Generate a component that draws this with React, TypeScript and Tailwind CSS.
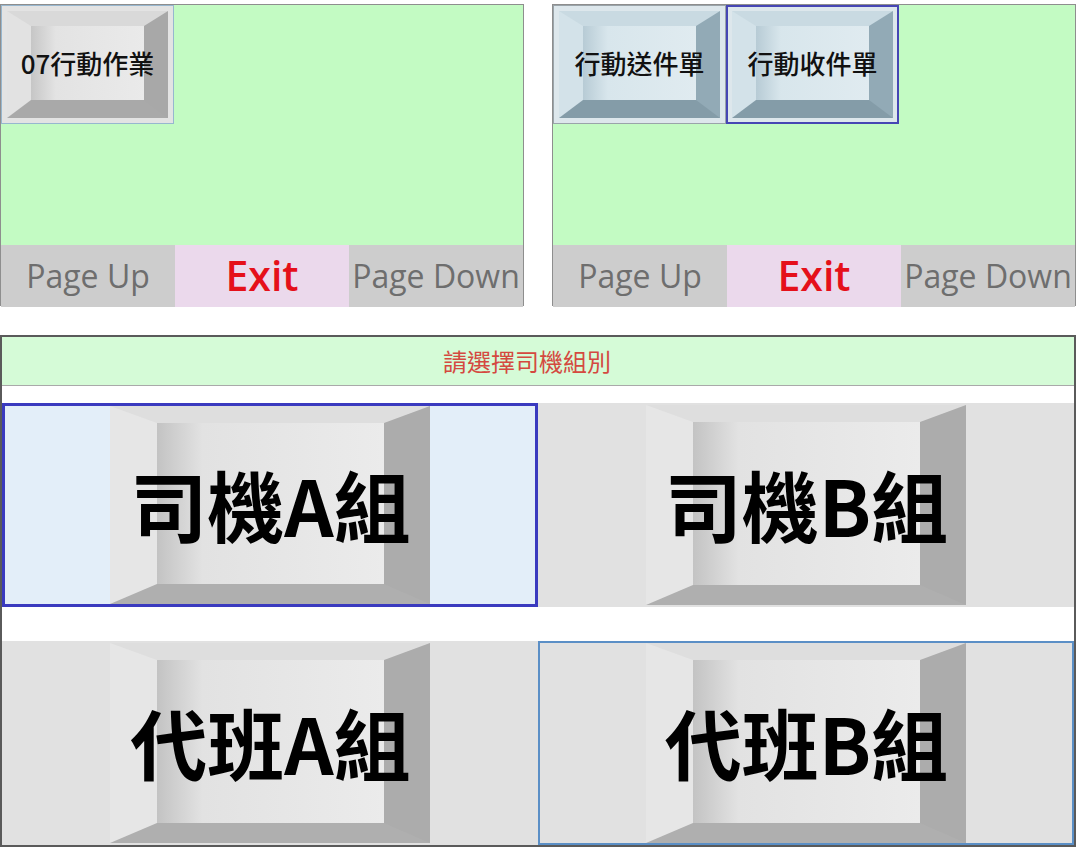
import React from 'react';

const cjk = "font-['Noto_Sans_CJK_TC','Noto_Sans_CJK_SC',sans-serif]";
const latin = "font-['Open_Sans','Noto_Sans',sans-serif]";

type SmallProps = { label: string; tone: 'grey' | 'blue'; selected?: boolean };

// small bevelled key used on the top panels
const SmallKey = ({ label, tone, selected }: SmallProps) => {
   const frame = selected
      ? 'border-2 border-[#4646b4] p-[4px]'
      : tone === 'grey'
      ? 'border border-[#97b7cf] p-[5px]'
      : 'border border-[#9aa4aa] p-[5px]';
   const bevel =
      tone === 'grey'
         ? 'border-t-[#d9d9d9] border-l-[#e2e2e2] border-r-[#a8a8a8] border-b-[#a9a9a9] bg-[linear-gradient(90deg,#c6c6c6_0%,#e3e3e3_22%,#eaeaea_100%)]'
         : 'border-t-[#c9dae2] border-l-[#d3e2e9] border-r-[#92aab6] border-b-[#849ca8] bg-[linear-gradient(90deg,#b7cbd5_0%,#d8e6ec_22%,#e0ebf0_100%)]';
   return (
      <div
         className={`w-[173px] h-[119px] ${frame} ${
            tone === 'grey' ? 'bg-[#e3e3e3]' : 'bg-[#dde7ec]'
         }`}
      >
         <div
            className={`h-full border-solid border-t-[15px] border-l-[24px] border-r-[24px] border-b-[18px] ${bevel} flex items-center justify-center`}
         >
            <span className={`${cjk} whitespace-nowrap text-[26px] font-medium text-[#111] leading-none`}>
               {label}
            </span>
         </div>
      </div>
   );
};

type PanelProps = { keys: SmallProps[] };

const Panel = ({ keys }: PanelProps) => (
   <div className="w-[524px] h-[302px] border border-[#8e8e8e] flex flex-col">
      <div className="flex-1 bg-[#c3fbc3] flex items-start">
         {keys.map((k) => (
            <SmallKey key={k.label} {...k} />
         ))}
      </div>
      <div className="h-[60px] grid grid-cols-3">
         <div className={`bg-[#cdcdcd] flex items-center justify-center ${latin} text-[32px] text-[#6e6e6e]`}>
            Page Up
         </div>
         <div className={`bg-[#ebd9ec] flex items-center justify-center ${latin} text-[41px] font-semibold text-[#e5101a]`}>
            Exit
         </div>
         <div className={`bg-[#cdcdcd] flex items-center justify-center ${latin} text-[32px] text-[#6e6e6e] whitespace-nowrap`}>
            Page Down
         </div>
      </div>
   </div>
);

type BigProps = { label: string; variant: 'active' | 'outlined' | 'plain' };

// large group key in the driver selection panel
const BigKey = ({ label, variant }: BigProps) => {
   const cell =
      variant === 'active'
         ? 'border-[3px] border-[#3a3abf] bg-[#e3eef9]'
         : variant === 'outlined'
         ? 'border-2 border-[#5b8fc6] bg-[#e1e1e1]'
         : 'border-2 border-[#e1e1e1] bg-[#e1e1e1]';
   return (
      <div className={`h-full flex justify-center ${cell}`}>
         <div className="w-[320px] h-full border-solid border-t-[17px] border-l-[47px] border-r-[46px] border-b-[20px] border-t-[#dedede] border-l-[#e6e6e6] border-r-[#acacac] border-b-[#afafaf] bg-[linear-gradient(90deg,#c3c3c3_0%,#e2e2e2_20%,#ebebeb_100%)] flex items-center justify-center">
            <span className={`${cjk} whitespace-nowrap text-[77px] font-bold text-black leading-none`}>
               {label}
            </span>
         </div>
      </div>
   );
};

export default function App() {
   return (
      <div className="w-[1080px] h-[851px] bg-white pt-[4px]">
         <div className="flex gap-[28px]">
            <Panel keys={[{ label: '07行動作業', tone: 'grey' }]} />
            <Panel
               keys={[
                  { label: '行動送件單', tone: 'blue' },
                  { label: '行動收件單', tone: 'blue', selected: true },
               ]}
            />
         </div>
         <div className="mt-[29px] w-[1076px] h-[512px] border-2 border-[#5a5a5a] flex flex-col">
            <div className="h-[49px] bg-[#d5fbd7] border-b border-[#a9a9a9] flex items-center justify-center">
               <span className={`${cjk} text-[24px] text-[#d4493f] pr-[22px]`}>請選擇司機組別</span>
            </div>
            <div className="h-[17px]" />
            <div className="h-[204px] grid grid-cols-2">
               <BigKey label="司機A組" variant="active" />
               <BigKey label="司機B組" variant="plain" />
            </div>
            <div className="h-[34px]" />
            <div className="flex-1 grid grid-cols-2">
               <BigKey label="代班A組" variant="plain" />
               <BigKey label="代班B組" variant="outlined" />
            </div>
         </div>
      </div>
   );
}
